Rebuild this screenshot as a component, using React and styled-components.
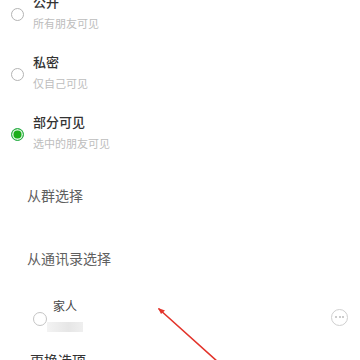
import React from "react";
import styled, { createGlobalStyle } from "styled-components";

const Global = createGlobalStyle`
  html, body { margin: 0; padding: 0; background: #fff; }
  body { font-family: "Noto Sans CJK SC", "Noto Sans", sans-serif; overflow: hidden; }
`;

const Page = styled.div`
  width: 360px;
  height: 360px;
  overflow: hidden;
  background: #fff;
`;

const Inner = styled.div`
  margin-top: -8px;
  display: flex;
  flex-direction: column;
`;

const Option = styled.div`
  height: 60px;
  box-sizing: border-box;
  padding-left: 11px;
  display: grid;
  grid-template-columns: 13px 1fr;
  grid-template-rows: 20px 16px;
  column-gap: 9px;
  row-gap: 3px;
  align-content: start;
`;

const Radio = styled.span`
  grid-row: 1 / span 2;
  align-self: center;
  margin-top: 6px;
  width: 13px;
  height: 13px;
  box-sizing: border-box;
  border-radius: 50%;
  border: 1.5px solid ${(p) => (p.$checked ? "#2aae4a" : "#b4b4b4")};
  background: ${(p) => (p.$checked ? "#1aad19" : "transparent")};
  box-shadow: ${(p) => (p.$checked ? "inset 0 0 0 1.5px #d6f1d9" : "none")};
`;

const Title = styled.div`
  font-size: 13px;
  line-height: 20px;
  font-weight: 500;
  color: #333;
`;

const Sub = styled.div`
  font-size: 11px;
  line-height: 16px;
  color: #bdbdbd;
`;

const LinkRow = styled.div`
  box-sizing: border-box;
  height: 63px;
  padding: 13px 0 0 27px;
  font-size: 14px;
  line-height: 20px;
  color: #606060;
`;

const FamilyRow = styled.div`
  position: relative;
  height: 38px;
  box-sizing: border-box;
  padding: 0 12px 0 33px;
  display: flex;
  align-items: center;
  justify-content: space-between;
`;

const FamilyLeft = styled.div`
  display: flex;
  align-items: center;
  gap: 6px;
`;

const FamilyRadio = styled.span`
  width: 14px;
  height: 14px;
  box-sizing: border-box;
  border-radius: 50%;
  border: 1.5px solid #c4c4c4;
  margin-top: 4px;
`;

const FamilyText = styled.div`
  display: flex;
  flex-direction: column;
  gap: 9px;
  margin-top: -4px;
`;

const FamilyTitle = styled.div`
  font-size: 12px;
  line-height: 14px;
  color: #444;
`;

const Blur = styled.div`
  width: 36px;
  height: 10px;
  margin-left: -6px;
  background: linear-gradient(90deg, #f3f3f3, #e6e6e6 60%, #efefef);
  filter: blur(0.6px);
`;

const MoreBtn = styled.span`
  width: 17px;
  height: 17px;
  box-sizing: border-box;
  border-radius: 50%;
  border: 1px solid #cfcfcf;
  display: flex;
  align-items: center;
  justify-content: center;
  gap: 1.5px;
`;

const Dot = styled.span`
  width: 2px;
  height: 2px;
  border-radius: 50%;
  background: #bbb;
`;

const Arrow = styled.svg`
  position: absolute;
  left: 150px;
  top: 2px;
  overflow: visible;
  pointer-events: none;
`;

const Bottom = styled.div`
  margin-top: 14px;
  padding-left: 30px;
  font-size: 14px;
  line-height: 20px;
  color: #333;
`;

const options = [
  { title: "公开", sub: "所有朋友可见" },
  { title: "私密", sub: "仅自己可见" },
  { title: "部分可见", sub: "选中的朋友可见", checked: true },
];

export default function App() {
  return (
    <Page>
      <Global />
      <Inner>
        {options.map((o) => (
          <Option key={o.title}>
            <Radio $checked={o.checked} />
            <Title>{o.title}</Title>
            <Sub>{o.sub}</Sub>
          </Option>
        ))}
        <LinkRow>从群选择</LinkRow>
        <LinkRow>从通讯录选择</LinkRow>
        <FamilyRow>
          <FamilyLeft>
            <FamilyRadio />
            <FamilyText>
              <FamilyTitle>家人</FamilyTitle>
              <Blur />
            </FamilyText>
          </FamilyLeft>
          <MoreBtn>
            <Dot />
            <Dot />
            <Dot />
          </MoreBtn>
          <Arrow width="80" height="70" viewBox="0 0 80 70">
            <line x1="9" y1="9" x2="68" y2="62" stroke="#e3342b" strokeWidth="1.6" strokeLinecap="round" />
            <polygon points="8,8 15,10.5 11,14" fill="#e3342b" />
          </Arrow>
        </FamilyRow>
        <Bottom>更换选项</Bottom>
      </Inner>
    </Page>
  );
}
